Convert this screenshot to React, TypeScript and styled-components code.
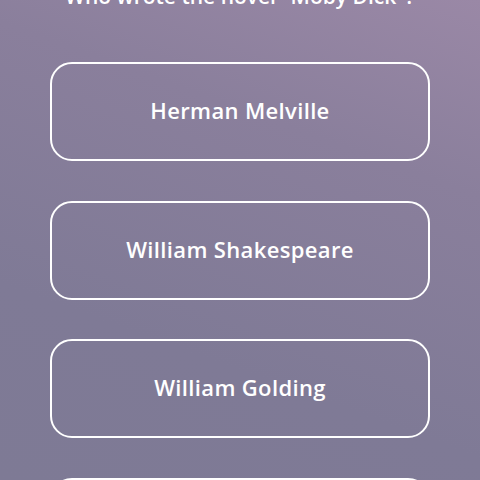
import React from "react";
import styled, { createGlobalStyle } from "styled-components";

const Global = createGlobalStyle`
  html, body { margin: 0; padding: 0; }
  body {
    width: 480px;
    height: 480px;
    overflow: hidden;
    background: linear-gradient(200deg, #9a88a6 0%, #8a7f9c 30%, #7f7a96 70%, #7e7a95 100%);
    font-family: "Open Sans", "Noto Sans", sans-serif;
  }
`;

const Screen = styled.main`
  display: flex;
  flex-direction: column;
  align-items: center;
  margin-top: -19px;
`;

const Question = styled.h1`
  margin: 0;
  height: 30px;
  line-height: 30px;
  font-size: 21px;
  font-weight: 600;
  color: #fff;
  text-align: center;
`;

const Answers = styled.div`
  display: flex;
  flex-direction: column;
  gap: 39.5px;
  margin-top: 51px;
`;

const Answer = styled.button`
  width: 380px;
  height: 99px;
  box-sizing: border-box;
  border: 2px solid #fff;
  border-radius: 22px;
  background: transparent;
  color: #fff;
  font-family: "Open Sans", "Noto Sans", sans-serif;
  font-size: 22px;
  font-weight: 600;
  letter-spacing: 0.35px;
  padding: 0 0 3px;
  display: flex;
  align-items: center;
  justify-content: center;
  cursor: pointer;
`;

const answers = ["Herman Melville", "William Shakespeare", "William Golding", "Mark Twain"];

export default function App() {
  return (
    <>
      <Global />
      <Screen>
        <Question>Who wrote the novel "Moby Dick"?</Question>
        <Answers>
          {answers.map((a) => (
            <Answer key={a}>{a}</Answer>
          ))}
        </Answers>
      </Screen>
    </>
  );
}
